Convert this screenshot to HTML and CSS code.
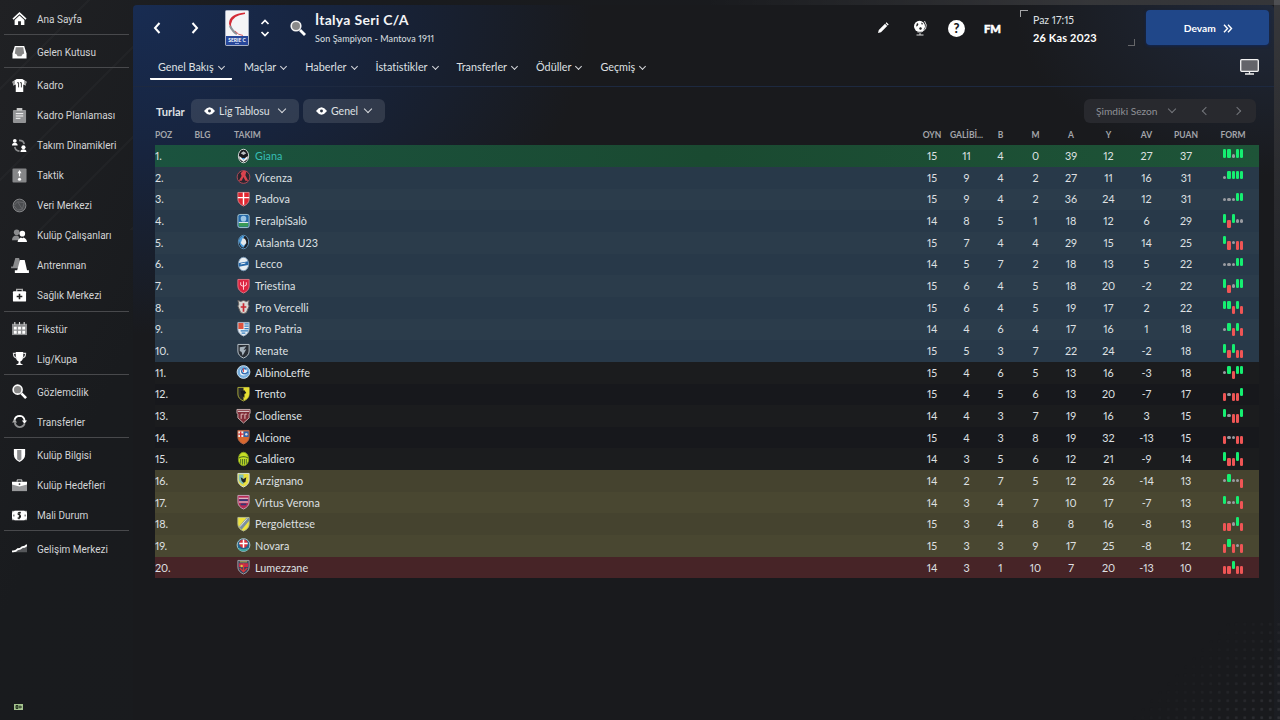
FILE: index.html
```
<!DOCTYPE html>
<html lang="tr">
<head>
    <meta charset="UTF-8">
    <meta name="viewport" content="width=device-width, initial-scale=1.0">
    <title>İtalya Seri C/A</title>
    <link rel="stylesheet" href="styles.css">
</head>
<body>
    <nav class="sidebar">
        <a class="item"><svg viewBox="0 0 16 16"><path d="M8 1 0.5 8l1.2 1.2L8 3.4l6.3 5.8L15.500 8z" fill="#fff"/><path d="M8 4.800 2.800 9.500V15h3.700v-4h3v4h3.700V9.500z" fill="#fff"/></svg>Ana Sayfa</a>
        <hr>
        <a class="item"><svg viewBox="0 0 16 16"><path d="M3 1h10l2.500 8v5.500h-15V9z" fill="#fff"/><path d="M4 2.500h8l1 6.500-2 1.200L10 12H6l-1-1.800L3 9z" fill="#888"/></svg>Gelen Kutusu</a>
        <hr>
        <a class="item"><svg viewBox="0 0 16 16"><path d="M5 1h6l4.500 3-1 4-2.500-1v8H4V7L1.500 8l-1-4z" fill="#fff"/><path d="M0.500 4 3 2.500V7L1.500 8zM15.500 4 13 2.500V7l1.500 1z" fill="#999"/><path d="M5.500 5h1.500v5M8.500 5H10v5" stroke="#333" fill="none"/></svg>Kadro</a>
        <a class="item"><svg viewBox="0 0 16 16"><rect x="1" y="2" width="14" height="14" rx="1" fill="#929395"/><path d="M5 0h6v3H5z" fill="#c8c8c8"/><path d="M4 6h8M4 8.500h8M4 11h5" stroke="#fff"/></svg>Kadro Planlaması</a>
        <a class="item"><svg viewBox="0 0 16 16"><circle cx="3" cy="3" r="2" fill="#fff"/><path d="M0 8q0-3 3-3t3 3zM9 15q0-3 3.200-3t3.200 3z" fill="#fff"/><circle cx="12.200" cy="9.800" r="2.200" fill="#fff"/><path d="M7.500 2.500q5 0 5.500 4M3 9.500q.5 4 5 4.500" stroke="#8b8c8e" stroke-width="1.700" fill="none"/></svg>Takım Dinamikleri</a>
        <a class="item"><svg viewBox="0 0 16 16"><rect x="0.500" y="0.500" width="15" height="15" rx="1" fill="#858688"/><path d="M8 5v4" stroke="#fff" stroke-width="1.300"/><path d="M5.800 5.500h4.400L8 2z" fill="#fff"/><circle cx="8" cy="12" r="1.700" fill="#fff"/></svg>Taktik</a>
        <a class="item"><svg viewBox="0 0 16 16"><circle cx="8" cy="8" r="6.800" fill="#4a4c4f" stroke="#8a8b8d"/><path d="M2 8l4-4 7 1-2 7-5 1zM6 4l5 8" stroke="#66686b" fill="none"/></svg>Veri Merkezi</a>
        <a class="item"><svg viewBox="0 0 16 16"><circle cx="5" cy="4.500" r="3" fill="#8b8c8e"/><path d="M0 13q0-5 5-5 3 0 3 5z" fill="#8b8c8e"/><circle cx="11" cy="6" r="3" fill="#fff"/><path d="M6 15q0-3 3.500-5l1.500 1 1.500-1Q16 12 16 15z" fill="#fff"/></svg>Kulüp Çalışanları</a>
        <a class="item"><svg class="wide" viewBox="0 0 19 16"><path d="M4.500 0h4l3 11H0v-2h2z" fill="#8b8c8e"/><path d="M9.500 2h5L17 13h2v3H4v-3h2.500z" fill="#fff"/></svg>Antrenman</a>
        <a class="item"><svg viewBox="0 0 16 16"><path d="M5 4V1.500h6V4" stroke="#aaa" stroke-width="1.500" fill="none"/><rect x="1" y="3.500" width="14" height="11" rx="1" fill="#fff"/><path d="M8 6v6M5 9h6" stroke="#222" stroke-width="1.700"/></svg>Sağlık Merkezi</a>
        <hr>
        <a class="item"><svg viewBox="0 0 16 16"><path d="M0 3h16v12H0z" fill="#8f9092"/><path d="M3 1v3M8 1v3M13 1v3" stroke="#ddd" stroke-width="1.200"/><path d="M2 6h3v3H2zM6.500 6h3v3h-3zM11 6h3v3h-3zM2 10.500h3v3H2zM6.500 10.500h3v3h-3zM11 10.500h3v3h-3z" fill="#fff"/></svg>Fikstür</a>
        <a class="item"><svg viewBox="0 0 16 16"><path d="M4 1h8v4q0 5-3 6v2l3 2H4l3-2v-2Q4 10 4 5z" fill="#fff"/><path d="M4 2.500H1.500q0 5 4 5M12 2.500h2.500q0 5-4 5" stroke="#ddd" stroke-width="1.200" fill="none"/></svg>Lig/Kupa</a>
        <hr>
        <a class="item"><svg viewBox="0 0 16 16"><circle cx="6" cy="6" r="4.800" fill="#888" stroke="#fff" stroke-width="1.700"/><path d="m10 10 5 5" stroke="#fff" stroke-width="2.800"/></svg>Gözlemcilik</a>
        <a class="item"><svg viewBox="0 0 16 16"><path d="M2.500 7q1-5 6-5 4.500.3 5 5.500" stroke="#fff" stroke-width="2" fill="none"/><path d="M10.500 7H16l-2.700 3.500z" fill="#fff"/><path d="M13.500 10q-1.500 4-5.500 4-4.500-.5-5-5" stroke="#909193" stroke-width="2" fill="none"/><path d="M0 9h5.500L2.700 5.500z" fill="#aaa"/></svg>Transferler</a>
        <hr>
        <a class="item"><svg viewBox="0 0 16 16"><path d="M2 1h12v6q0 5-6 8-6-3-6-8z" fill="#fff"/><path d="M5.500 2H10v10l-2 1.500-2.500-1.500z" fill="#8d8e90"/></svg>Kulüp Bilgisi</a>
        <a class="item"><svg viewBox="0 0 16 16"><path d="M5.500 4V2h5v2" stroke="#ddd" fill="none"/><path d="M0 5h16v9H0z" fill="#98999b"/><path d="M0 4h16v3L8 9 0 7z" fill="#fff"/><circle cx="8" cy="6.500" r="1" fill="#333"/></svg>Kulüp Hedefleri</a>
        <a class="item"><svg viewBox="0 0 16 16"><path d="M0 3h16v10H0z" fill="#aaa"/><path d="M3 3h10l3 2v6l-3 2H3l-3-2V5z" fill="#fff"/><path d="M9.500 5q-3-1-3 1.500 3 1 2.500 3-.5 1.800-3 1M8.500 4 7.500 12" stroke="#222" stroke-width="1.200" fill="none"/><path d="M2 7v2M14 7v2" stroke="#333"/></svg>Mali Durum</a>
        <hr>
        <a class="item"><svg viewBox="0 0 16 16"><path d="M0 11q4 .5 6-2 3 0 5-2.500 3 0 5-2V12H0z" fill="#55575a"/><path d="M0 11q4 .500 6-2.200 3 0 5-2.300 3 0 5-2.500" stroke="#fff" stroke-width="2" fill="none"/></svg>Gelişim Merkezi</a>
        <svg class="status" viewBox="0 0 9 6"><path d="M0 0h9v6H0z" fill="#a5c48f"/><path d="M2 1.500h2v3H2zM5 3h3M6 1.500v3" stroke="#263522" fill="#53704a"/></svg>
    </nav>

    <main class="panel">
        <header class="topbar">
            <div class="arrows">
                <svg viewBox="0 0 8 12"><path d="M6.500 1 2 6l4.500 5"/></svg>
                <svg viewBox="0 0 8 12"><path d="M1.500 1 6 6l-4.500 5"/></svg>
            </div>
            <svg class="league" viewBox="0 0 24 36">
                <rect x=".5" y=".5" width="23" height="35" rx="1" fill="#f4f4f6" stroke="#a9b1c4"/>
                <path d="M20 2.500Q4 4 4 13.500 4.500 17 7 20q-1-3-1-6Q7 5.500 20 4z" fill="#d32b36"/>
                <path d="M5 16q3 6 7 8" stroke="#8c9299" stroke-width="2.200" fill="none"/>
                <path d="M10 21q3 4 8 4.500" stroke="#d9626a" fill="none"/>
                <path d="M1 26h22v9H1z" fill="#27479a"/>
                <text x="12" y="31.500">SERIE C</text>
                <path d="M10 33.500h4" stroke="#8fa5dc"/>
            </svg>
            <svg class="updown" viewBox="0 0 10 18"><path d="m1.500 5 3.500-3.500L8.500 5M1.500 13 5 16.500 8.500 13"/></svg>
            <svg class="search" viewBox="0 0 16 16"><circle cx="6" cy="6" r="4.800" fill="#8a8a8a" stroke="#f4f4f4" stroke-width="1.600"/><path d="m10 10 5 5" stroke="#fff" stroke-width="2.800"/></svg>
            <div class="heading">
                <h1>İtalya Seri C/A</h1>
                <p>Son Şampiyon - Mantova 1911</p>
            </div>
            <div class="tools">
                <svg class="pencil" viewBox="0 0 12 12"><path d="m1 11 .8-3L8 1.800 10.200 4 4 10.200zM8.600 1.200l.9-.9 2.200 2.200-.9.9z" fill="#fff"/></svg>
                <svg class="globe" viewBox="0 0 14 16"><circle cx="6.500" cy="6.300" r="5.500" fill="#fff"/><path d="m4 3 1.500 1-1 2L3 6.500zM8 2.500l2 1-1 1.500zM6 8l2-1 1 2-2 1z" fill="#222"/><path d="M11.500 1q3 4 1 8-3 4-8 3M7 13v2M3.500 15h7" stroke="#ddd" fill="none"/></svg>
                <span class="help">?</span>
                <span class="fm">FM</span>
            </div>
            <div class="date"><span>Paz 17:15</span><strong>26 Kas 2023</strong></div>
            <button class="continue">Devam <svg viewBox="0 0 10 9"><path d="m1 .8 3.500 3.700L1 8.200M5 .8l3.500 3.700L5 8.200"/></svg></button>
        </header>

        <div class="tabs">
            <a class="active">Genel Bakış<i></i></a>
            <a>Maçlar<i></i></a>
            <a>Haberler<i></i></a>
            <a>İstatistikler<i></i></a>
            <a>Transferler<i></i></a>
            <a>Ödüller<i></i></a>
            <a>Geçmiş<i></i></a>
            <svg class="monitor" viewBox="0 0 19 16"><rect x=".7" y=".7" width="17.600" height="11.600" rx="1" fill="#63646a" stroke="#f2f2f2" stroke-width="1.300"/><path d="M9.500 12.500v2M5 15h9" stroke="#eee" stroke-width="1.300"/></svg>
        </div>

        <div class="filters">
            <b>Turlar</b>
            <span class="pill table-pill"><svg viewBox="0 0 12 8"><path d="M0 4q6-8 12 0-6 8-12 0z"/><circle cx="6" cy="4" r="1.600"/></svg>Lig Tablosu<i></i></span>
            <span class="pill general-pill"><svg viewBox="0 0 12 8"><path d="M0 4q6-8 12 0-6 8-12 0z"/><circle cx="6" cy="4" r="1.600"/></svg>Genel<i></i></span>
            <span class="pill season">Şimdiki Sezon<i></i><i class="prev"></i><i class="next"></i></span>
        </div>

        <section class="standings">
            <div class="row head">
                <span>POZ</span><span>BLG</span><span>TAKIM</span><span>OYN</span><span>GALİBİ...</span><span>B</span><span>M</span><span>A</span><span>Y</span><span>AV</span><span>PUAN</span><span>FORM</span>
            </div>
            <div id="rows"></div>
        </section>
    </main>
    <script src="script.js"></script>
</body>
</html>
```
FILE: styles.css
```
* {
    box-sizing: border-box;
}

body {
    margin: 0;
    width: 1280px;
    height: 720px;
    overflow: hidden;
    display: flex;
    background:
        linear-gradient(90deg, transparent 55%, rgba(255, 255, 255, 0.12) 85%) 0 0 / 100% 5px no-repeat,
        linear-gradient(rgba(255, 255, 255, 0.13), transparent) 100% 0 / 6px 420px no-repeat,
        linear-gradient(115deg, #202124 0, #191b1e 18%, #191a1e 80%, #1b1d22 100%);
    color: #dfe0e3;
    font-family: Lato, "Liberation Sans", sans-serif;
    font-size: 10.8px;
    font-variant-numeric: proportional-nums;
    font-variant-ligatures: none;
}

i {
    display: inline-block;
    width: 5px;
    height: 5px;
    border: solid #d6d8dc;
    border-width: 0 1.6px 1.6px 0;
    transform: translateY(-2px) rotate(45deg);
}

/* sidebar */
.sidebar {
    width: 133px;
    padding-top: 4px;
    display: flex;
    flex-direction: column;
    background: repeating-linear-gradient(135deg, transparent 0 62px, rgba(255, 255, 255, 0.025) 62px 64px) 0 0 / 100% 230px no-repeat;
}

.item {
    height: 30px;
    padding: 0.5px 0 0 12px;
    display: flex;
    align-items: center;
    gap: 10px;
    font-family: Roboto, sans-serif;
    font-size: 10px;
    color: #d3d4d6;
    white-space: nowrap;
}

.item svg {
    width: 15px;
    height: 15px;
    margin-top: -1px;
    flex: none;
}

.item .wide {
    width: 18px;
    margin: -1px -2px 0 -1px;
}

hr {
    width: 125px;
    height: 1px;
    margin: 0 0 2.3px 4px;
    border: 0;
    background: #48494c;
}

.status {
    width: 9px;
    height: 6px;
    margin: auto 0 10px 14px;
}

/* main panel */
.panel {
    width: 1141px;
    margin-top: 5px;
    border-radius: 4px 4px 0 0;
    background:
        radial-gradient(ellipse 260px 170px at 100% 0, #20293b 0, transparent 100%),
        radial-gradient(ellipse 460px 330px at 0 0, #182c52 0, #17243e 45%, transparent 100%),
        #191a1d;
}

/* dotted texture in the bottom corner */
body::after {
    content: "";
    position: absolute;
    right: 0;
    bottom: 0;
    width: 150px;
    height: 100px;
    background: radial-gradient(circle, #303136 1.2px, transparent 1.7px) 0 0 / 8.5px 8.5px;
    -webkit-mask-image: linear-gradient(315deg, #000, transparent 60%);
    mask-image: linear-gradient(315deg, #000, transparent 60%);
}

.topbar {
    height: 46px;
    display: flex;
    align-items: center;
}

.arrows {
    width: 92px;
    padding-left: 20px;
    display: flex;
    gap: 30px;
}

.arrows svg {
    width: 8px;
    height: 12px;
}

.arrows path,
.updown path,
.continue path {
    fill: none;
    stroke: #fff;
    stroke-width: 2;
}

.league {
    width: 24px;
    height: 36px;
}

.league text {
    fill: #fff;
    font-size: 5px;
    font-weight: bold;
    text-anchor: middle;
}

.updown {
    width: 10px;
    height: 18px;
    margin-left: 11px;
}

.updown path {
    stroke-width: 1.7;
}

.search {
    width: 16px;
    height: 16px;
    margin-left: 20px;
}

.heading {
    width: 558px;
    margin-left: 9px;
}

h1 {
    margin: 0;
    font-size: 14px;
    line-height: 17px;
    font-weight: bold;
    letter-spacing: 0.28px;
    color: #f3f4f6;
}

.heading p {
    margin: 4px 0 0;
    font-size: 9px;
    line-height: 14px;
    letter-spacing: 0.1px;
}

.tools {
    width: 147px;
    display: flex;
    align-items: center;
}

.pencil {
    width: 12px;
    height: 12px;
    margin-left: 4px;
}

.globe {
    width: 14px;
    height: 16px;
    margin-left: 24px;
}

.help {
    width: 17px;
    height: 17px;
    margin-left: 21px;
    border-radius: 50%;
    background: #fff;
    color: #191a1d;
    font-size: 13px;
    line-height: 17px;
    font-weight: 900;
    text-align: center;
}

.fm {
    margin-left: 19px;
    color: #fff;
    font-size: 11.2px;
    font-weight: 900;
    -webkit-text-stroke: 0.5px #fff;
}

.date {
    width: 115px;
    height: 36px;
    padding: 2px 0 0 13px;
    background:
        linear-gradient(#a4a5a7, #a4a5a7) 0 0 / 8px 1px,
        linear-gradient(#a4a5a7, #a4a5a7) 0 0 / 1px 7px,
        linear-gradient(#66676a, #66676a) 100% 100% / 7px 1px,
        linear-gradient(#66676a, #66676a) 100% 100% / 1px 7px;
    background-repeat: no-repeat;
    display: flex;
    flex-direction: column;
    line-height: 17px;
    font-size: 10.5px;
}

.date strong {
    font-size: 11px;
    letter-spacing: 0.15px;
    color: #fff;
}

.continue {
    width: 123px;
    height: 35px;
    margin: -1px 0 0 11px;
    padding: 0 6px 0 8px;
    border: 0;
    border-radius: 4px;
    background: #204789;
    box-shadow: 0 1px 3px #10275a;
    color: #fff;
    font: bold 10.2px Lato, sans-serif;
    flex: none;
}

.continue svg {
    width: 10px;
    height: 9px;
    margin-left: 5px;
    vertical-align: -1px;
}

.continue path {
    stroke-width: 1.4;
}

/* tabs */
.tabs {
    height: 36px;
    padding-left: 17px;
    border-bottom: 1px solid #1d2940;
    display: flex;
}

.tabs a {
    height: 29px;
    padding: 8px 8px 0;
    margin-right: 3px;
    line-height: 16px;
    white-space: nowrap;
}

.tabs i {
    margin-left: 5px;
}

.tabs .active {
    width: 82px;
    margin-right: 4px;
    border-bottom: 2px solid #fff;
    border-radius: 1px;
}

.monitor {
    width: 19px;
    height: 16px;
    margin: 8px 15px 0 auto;
}

/* filters */
.filters {
    height: 39px;
    padding: 12px 18px 0 23px;
    display: flex;
    gap: 4px;
}

.filters b {
    width: 31px;
    line-height: 25px;
    font-size: 11.2px;
}

.pill {
    height: 24px;
    padding: 0 14px 1px 13px;
    border-radius: 6px;
    background: rgba(120, 126, 138, 0.28);
    display: flex;
    align-items: center;
    white-space: nowrap;
    font-size: 10.5px;
}

.pill svg {
    width: 11px;
    height: 8px;
    margin-right: 4px;
    fill: #fff;
}

.pill svg circle {
    fill: #2b3343;
}

.pill i {
    width: 6px;
    height: 6px;
    margin-left: auto;
    border-width: 0 1.8px 1.8px 0;
}

.table-pill {
    width: 108px;
}

.general-pill {
    width: 82px;
}

.season {
    width: 172px;
    margin-left: auto;
    padding-left: 12px;
    background: #28292e;
    color: #8f9196;
    font-size: 10.2px;
}

.season i {
    margin-left: 11px;
    border-color: #74767b;
}

.season .prev {
    margin-left: 28px;
    transform: rotate(135deg);
}

.season .next {
    margin-left: 25px;
    transform: rotate(-45deg);
}

/* table */
.standings {
    width: 1103.5px;
    margin-left: 22px;
}

.row {
    height: 21.66px;
    padding-bottom: 1px;
    display: grid;
    grid-template-columns: 39.5px 39.5px 681px 34px 35px 33px 37px 34px 41px 35px 44px 50px;
    align-items: center;
    text-align: center;
    white-space: nowrap;
    background: #17181c;
}

.row > :nth-child(-n+3) {
    text-align: left;
}

.row:nth-child(odd) {
    background: #1b1c1e;
}

.head,
.head:nth-child(odd) {
    height: 19.3px;
    padding-bottom: 2px;
    background: none;
    color: #a3a5aa;
    font-size: 8.5px;
    font-weight: bold;
}

.row.playoff {
    background: #283949;
}

.row.playoff:nth-child(odd) {
    background: #2b3c4b;
}

.row.playout {
    background: #45432f;
}

.row.playout:nth-child(odd) {
    background: #494731;
}

.row.relegated {
    background: #472427;
}

.row.champion:nth-child(odd) {
    background: linear-gradient(90deg, #1b533f, #1a4a31 50%, #1e5438);
}

.champion .team {
    color: #36bdb4;
}

.team {
    padding-left: 2px;
    display: flex;
    align-items: center;
    gap: 4px;
    letter-spacing: 0.05px;
}

.team svg {
    width: 15px;
    height: 16px;
}

.form {
    height: 100%;
    padding: 4px 0 0 15px;
    display: flex;
    gap: 1px;
}

.form span {
    width: 3.3px;
    height: 8.3px;
    border-radius: 1.3px;
}

.form .w {
    background: #15ef71;
}

.form .l {
    margin-top: 5.3px;
    background: #ef5555;
}

.form .d {
    height: 3.3px;
    margin-top: 5px;
    border-radius: 50%;
    background: #999ca1;
}
```
FILE: script.js
```
// name, played, won, drawn, lost, for, against, difference, points, form
const teams = [
    ['Giana', 15, 11, 4, 0, 39, 12, 27, 37, 'wwdww'],
    ['Vicenza', 15, 9, 4, 2, 27, 11, 16, 31, 'dwwww'],
    ['Padova', 15, 9, 4, 2, 36, 24, 12, 31, 'dddww'],
    ['FeralpiSalò', 14, 8, 5, 1, 18, 12, 6, 29, 'wlwdd'],
    ['Atalanta U23', 15, 7, 4, 4, 29, 15, 14, 25, 'wldll'],
    ['Lecco', 14, 5, 7, 2, 18, 13, 5, 22, 'dddww'],
    ['Triestina', 15, 6, 4, 5, 18, 20, -2, 22, 'wldww'],
    ['Pro Vercelli', 15, 6, 4, 5, 19, 17, 2, 22, 'wwlwl'],
    ['Pro Patria', 14, 4, 6, 4, 17, 16, 1, 18, 'dwlwl'],
    ['Renate', 15, 5, 3, 7, 22, 24, -2, 18, 'wlwll'],
    ['AlbinoLeffe', 15, 4, 6, 5, 13, 16, -3, 18, 'dwlww'],
    ['Trento', 15, 4, 5, 6, 13, 20, -7, 17, 'ldllw'],
    ['Clodiense', 14, 4, 3, 7, 19, 16, 3, 15, 'wdllw'],
    ['Alcione', 15, 4, 3, 8, 19, 32, -13, 15, 'lddll'],
    ['Caldiero', 14, 3, 5, 6, 12, 21, -9, 14, 'wllwl'],
    ['Arzignano', 14, 2, 7, 5, 12, 26, -14, 13, 'dwddl'],
    ['Virtus Verona', 14, 3, 4, 7, 10, 17, -7, 13, 'wddwl'],
    ['Pergolettese', 15, 3, 4, 8, 8, 16, -8, 13, 'lldwl'],
    ['Novara', 15, 3, 3, 9, 17, 25, -8, 12, 'lwldl'],
    ['Lumezzane', 14, 3, 1, 10, 7, 20, -13, 10, 'llwll']
];

const shield = (fill, stroke) => `<path d="M2 1h12v7q0 5-6 7.500Q2 13 2 8z" fill="${fill}" stroke="${stroke}"/>`;
const oval = (fill, stroke) => `<ellipse cx="8" cy="8" rx="5.500" ry="7.200" fill="${fill}" stroke="${stroke}"/>`;
const disc = (fill, stroke) => `<circle cx="8" cy="8" r="6.800" fill="${fill}" stroke="${stroke}"/>`;

const crests = [
    oval('#17191d', '#d8dcdc') + '<path d="m3.500 8 4.500 3.500L12.500 8v3L8 14.500 3.500 11z" fill="#eee"/><path d="m5 5 3-2 3 2-3 2z" fill="#b9bec2"/><path d="M6 10h4l-2 2z" fill="#3c9ade"/>',
    disc('#29262f', '#b34a57') + '<path d="M8 1 5 4l1 3-3 5h3l2-4 2 4h3l-3-6 1-4z" fill="#d9434e"/>',
    shield('#e12732', '#d58387') + '<path d="M8 1v13M2 6.500h12" stroke="#fff" stroke-width="1.500"/>',
    '<rect x="2" y="1" width="12" height="14" rx="2" fill="#2468a8" stroke="#a9cbd8"/><path d="M3 10h10v4H3z" fill="#3a9a56"/><circle cx="8" cy="5.500" r="3" fill="#9ac5e5"/><path d="M3 9.500h10" stroke="#fff"/>',
    oval('#1f1f23', '#5d91ba') + '<path d="M3 6q2-5 6-4.500L7 6l4 3-3 5q-4-1-5-8z" fill="#4d9bd8"/><path d="M7 4q4 0 4 5l-3 3-3-3z" fill="#e5e8ea"/>',
    oval('#e9eef2', '#7896b3') + '<path d="m3 7 10-2v4L3 11z" fill="#2869a9"/><path d="m5 8 5-1" stroke="#fff"/>',
    shield('#dd2440', '#e27483') + '<path d="M8 3v9M5 4v3q3 3 6 0V4" stroke="#ffd9dd" fill="none"/>',
    '<path d="m2 1 3 1 3-1 3 1 3-1-1 4 1 2-3 7-3 1-3-1-3-7 1-2z" fill="#d8d8d3" stroke="#67605e"/><path d="M8 4v9M5 8h6" stroke="#c92a32" stroke-width="1.800"/>',
    shield('#e9eef2', '#a6b7c9') + '<path d="M2.500 1.500H8V8H2.500z" fill="#dd533f"/><path d="M9 2.500h4.500M9 5h4.500M9 7.500h4.500M5 10h8M6 12.500h4" stroke="#347fbe" stroke-width="1.300"/>',
    shield('#292e35', '#bec7ce') + '<path d="m4 4 7-1-3 4 3-1-4 7-1-4-2-1z" fill="#a5b2bc"/>',
    disc('#77addb', '#d1e5f3') + '<circle cx="8" cy="8" r="3.800" fill="#e9f1f7"/><path d="M11 5q-4-2-5 2 0 3 4 3l3-2" stroke="#2e68ad" stroke-width="1.500" fill="none"/><path d="M8 4v4" stroke="#e14349"/>',
    shield('#292a2b', '#a9a73b') + '<path d="M8 1h6v7q0 5-6 7z" fill="#e7df33"/><path d="m5 5 4-1 2 3-2 1v4l-3-3z" fill="#181a1c"/>',
    '<path d="M1 1h14v4l-1 1v4l-6 5.500L2 10V6L1 5z" fill="#812e38" stroke="#cbb2b2"/><path d="M2 3h12" stroke="#eee"/><path d="M5.500 6v5M5.500 6H8M9.500 6v5M9.500 6h2" stroke="#e8c9c9" fill="none"/>',
    shield('#d7682f', '#b9664a') + '<path d="M2.500 2H8v6H2.500z" fill="#eee"/><path d="M8 2h5.500v6H8z" fill="#3263aa"/><path d="M5 2v6M2.500 5H8" stroke="#d62730" stroke-width="1.400"/><circle cx="11" cy="5" r="1.300" fill="#ddd"/>',
    oval('#c6df26', '#829c20') + '<path d="M5 8v5M7 8v6M9 8v6M11 8v5" stroke="#466927"/><path d="M3 7q5-3 10 0" stroke="#55761e" stroke-width="1.300" fill="none"/>',
    shield('#e9df3d', '#d9e2da') + '<path d="M3 2h5v11Q3 11 3 7z" fill="#80bfbb"/><path d="m5 5 3 2 3-2-1 5-2 1-2-2z" fill="#202322"/>',
    shield('#b72b55', '#c3a1ba') + '<path d="M3 4h10M3 8h10" stroke="#eee"/><path d="M3.500 6h9M5 10.500h6" stroke="#313975" stroke-width="2"/>',
    shield('#efe43b', '#b9bd8f') + '<path d="M3 11 11 1.500h3v3L6 14z" fill="#7b8fa1"/><path d="m4 11 8-9" stroke="#e7e8d8"/>',
    disc('#20658d', '#a8ccd2') + '<circle cx="8" cy="6.500" r="4.500" fill="#d8343d"/><path d="M8 2v9M3.500 6.500h9" stroke="#fff" stroke-width="1.600"/><path d="M3 12q5 3 10 0" stroke="#44a8a0" stroke-width="2" fill="none"/>',
    shield('#34435f', '#a2a4a7') + '<path d="M3 4h10v4H3z" fill="#c92a48"/><path d="M8 4v9M4 9l4 4 4-4" stroke="#d0383c" stroke-width="1.500" fill="none"/><path d="M4 2.500h8" stroke="#d8c451"/><circle cx="6" cy="7" r="1.300" fill="#e0c640"/>'
];

function zone(position) {
    if (position === 1) return 'champion';
    if (position <= 10) return 'playoff';
    if (position === 20) return 'relegated';
    return position > 15 ? 'playout' : '';
}

document.getElementById('rows').innerHTML = teams.map((team, index) => {
    const [name, ...stats] = team;
    const form = stats.pop();
    return `<div class="row ${zone(index + 1)}">
        <span>${index + 1}.</span><span></span>
        <span class="team"><svg viewBox="0 0 16 16">${crests[index]}</svg>${name}</span>
        ${stats.map(value => `<span>${value}</span>`).join('')}
        <span class="form">${[...form].map(result => `<span class="${result}"></span>`).join('')}</span>
    </div>`;
}).join('');
```
